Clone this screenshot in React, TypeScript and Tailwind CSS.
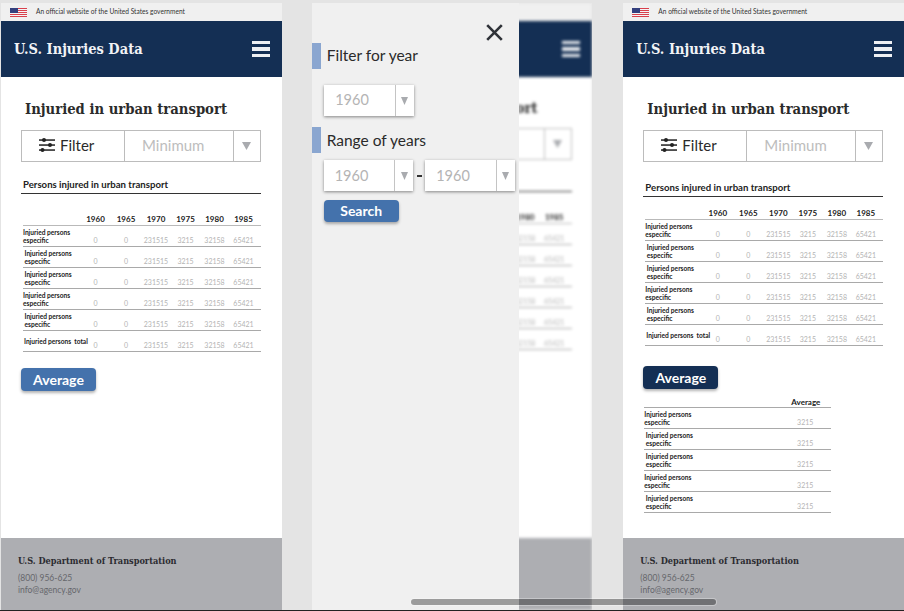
import React from "react";

const serif = "font-['DejaVu_Serif_Condensed','DejaVu_Serif',serif]";
const sans = "font-['Lato',sans-serif]";
const YEARS = ["1960", "1965", "1970", "1975", "1980", "1985"];
const VALUES = ["0", "0", "231515", "3215", "32158", "65421"];
const INDENTS = [false, true, true, false, true];
const GRID = "grid grid-cols-[57px_31px_30px_30px_29px_29px_29px]";

function Flag() {
  return (
    <svg width="17" height="9" viewBox="0 0 17 9" className="shrink-0">
      <rect width="17" height="9" fill="#f4f4f6" />
      {[0, 2, 4, 6, 8].map((y) => (
        <rect key={y} y={y} width="17" height="1" fill="#d9404c" />
      ))}
      <rect width="8" height="5" fill="#34407e" />
    </svg>
  );
}

function SliderIcon() {
  return (
    <svg width="16" height="16" viewBox="0 0 16 16" className="shrink-0" fill="#222">
      <rect y="2.3" width="16" height="1.5" />
      <rect y="7.3" width="16" height="1.5" />
      <rect y="12.3" width="16" height="1.5" />
      <circle cx="5" cy="3" r="2" />
      <circle cx="11" cy="8" r="2" />
      <circle cx="3.5" cy="13" r="2" />
    </svg>
  );
}

function Arrow({ size = "m" }: { size?: "m" | "s" }) {
  return (
    <svg width={size === "m" ? 9 : 7} height={8} viewBox="0 0 9 8" preserveAspectRatio="none">
      <path d="M0 0h9L4.5 8z" fill="#a9abaf" />
    </svg>
  );
}

function DataTable({ rowsTop }: { rowsTop: string }) {
  return (
    <div className={rowsTop}>
      <div className={`${GRID} h-[15px] items-end border-b border-[#b9b9b9] pb-[1px] text-center text-[8px] font-bold leading-[10px] text-[#222] ${sans}`}>
        <span />
        {YEARS.map((y) => (
          <span key={y}>{y}</span>
        ))}
      </div>
      {INDENTS.map((indent, i) => (
        <div key={i} className={`${GRID} h-[21px] border-b border-[#a9a9a9]`}>
          <span className={`self-center text-[6.6px] font-bold leading-[8.4px] text-[#222] ${sans} ${indent ? "pl-[1.5px]" : ""}`}>
            Injuried persons
            <br />
            especific
          </span>
          {VALUES.map((v, k) => (
            <span key={k} className={`self-end pb-[1px] text-center text-[7px] leading-[9px] text-[#b4b4b4] ${sans}`}>
              {v}
            </span>
          ))}
        </div>
      ))}
      <div className={`${GRID} h-[21px] border-b border-[#a9a9a9]`}>
        <span className={`self-center whitespace-nowrap pl-[1px] text-[6.6px] font-bold leading-[8px] text-[#222] ${sans}`}>
          Injuried persons&nbsp; total
        </span>
        {VALUES.map((v, k) => (
          <span key={k} className={`self-end pb-[1px] text-center text-[7px] leading-[9px] text-[#b4b4b4] ${sans}`}>
            {v}
          </span>
        ))}
      </div>
    </div>
  );
}

function AverageTable() {
  return (
    <div className="mt-[7px] ml-[1px] w-[187px]">
      <div className={`flex h-[12px] items-center justify-end border-b border-[#a9a9a9] pr-[11px] text-[8px] font-bold text-[#222] ${sans}`}>
        Average
      </div>
      {INDENTS.map((indent, i) => (
        <div key={i} className="flex h-[21px] justify-between border-b border-[#a9a9a9] pr-[18px]">
          <span className={`self-center text-[6.6px] font-bold leading-[8.4px] text-[#222] ${sans} ${indent ? "pl-[1.5px]" : ""}`}>
            Injuried persons
            <br />
            especific
          </span>
          <span className={`self-end pb-[1px] text-[7px] leading-[9px] text-[#b4b4b4] ${sans}`}>3215</span>
        </div>
      ))}
    </div>
  );
}

function Page({
  persons,
  titleGap,
  personsGap,
  tableGap,
  buttonGap,
  buttonDark,
  children,
}: {
  persons: string;
  titleGap: string;
  personsGap: string;
  tableGap: string;
  buttonGap: string;
  buttonDark?: boolean;
  children?: React.ReactNode;
}) {
  return (
    <div className="flex h-full flex-col bg-white">
      <div className="flex h-[18px] items-center gap-[9px] bg-[#f0f0f0] pl-[9px]">
        <Flag />
        <span className={`text-[6.6px] text-[#333] ${sans}`}>An official website of the United States government</span>
      </div>
      <header className="flex h-[56px] items-center justify-between bg-[#142f54] pl-[13px] pr-[12px]">
        <span className={`text-[14.5px] font-bold text-[#f1f3f6] ${serif}`}>U.S. Injuries Data</span>
        <div className="flex w-[18px] flex-col gap-[3px]">
          <span className="h-[3.5px] bg-[#eef0f3]" />
          <span className="h-[3.5px] bg-[#eef0f3]" />
          <span className="h-[3.5px] bg-[#eef0f3]" />
        </div>
      </header>
      <main className="flex-1 px-[20px]">
        <h1 className={`${titleGap} ml-[4px] whitespace-nowrap text-[14.7px] font-bold leading-[22px] text-[#2b2b2b] ${serif}`}>
          Injuried in urban transport
        </h1>
        <div className={`mt-[10px] flex h-[32px] w-[240px] items-stretch border border-[#bcbcbc] text-[15px] ${sans}`}>
          <div className="flex w-[103px] items-center gap-[5px] border-r border-[#bcbcbc] pb-[2px] pl-[17px] text-[#2a2a2a]">
            <SliderIcon />
            <span>Filter</span>
          </div>
          <div className="flex w-[109px] items-center border-r border-[#bcbcbc] pb-[2px] pl-[17px] text-[#bdbdbd]">Minimum</div>
          <div className="flex flex-1 items-center justify-center pr-[1px]">
            <Arrow />
          </div>
        </div>
        <div className={`${personsGap} ml-[2px] h-[15px] w-[238px] whitespace-nowrap text-[9.6px] font-bold leading-[13px] text-[#222] ${sans}`}>
          {persons}
        </div>
        <div className="h-px w-[240px] bg-[#333]" />
        <div className="ml-[2px] w-[238px]">
          <DataTable rowsTop={tableGap} />
        </div>
        <button className={`${buttonGap} flex h-[23px] w-[75px] items-center justify-center rounded-[4px] text-[14px] font-bold text-white shadow-[0_2px_3px_rgba(0,0,0,0.3)] ${sans} ${buttonDark ? "bg-[#142f54]" : "bg-[#4472ac]"}`}>
          Average
        </button>
        {children}
      </main>
      <footer className="h-[72px] bg-[#adaeb2] px-[17px] pt-[17px]">
        <div className={`text-[9.1px] font-bold leading-[12px] text-[#2b2b30] ${serif}`}>U.S. Department of Transportation</div>
        <div className="mt-[5px] font-['Lato',sans-serif] text-[8.5px] leading-[12px] text-[#66676c]">(800) 956-625</div>
        <div className="font-['Lato',sans-serif] text-[8.5px] leading-[12px] text-[#66676c]">info@agency.gov</div>
      </footer>
    </div>
  );
}

function YearSelect({ className = "", textPad = "pb-[1px]" }: { className?: string; textPad?: string }) {
  return (
    <div className={`flex h-[31px] w-[89.5px] items-stretch bg-white shadow-[0_1px_3px_rgba(0,0,0,0.45)] ${className}`}>
      <div className={`flex flex-1 items-center border-r border-[#c4c4c4] ${textPad} pl-[11px] text-[14.5px] text-[#b4b4b4] ${sans}`}>1960</div>
      <div className="flex w-[18px] items-center justify-center">
        <Arrow size="s" />
      </div>
    </div>
  );
}

function Drawer() {
  return (
    <div className="absolute inset-y-0 left-0 w-[207px] bg-[#f0f0f0]">
      <div className="mb-[2px] flex h-[38px] items-end justify-end pr-[16px]">
        <svg width="17" height="17" viewBox="0 0 17 17">
          <path d="M1.2 1.2 15.8 15.8M15.8 1.2 1.2 15.8" stroke="#2f3238" strokeWidth="2.6" fill="none" />
        </svg>
      </div>
      <div className="flex h-[26px] items-center">
        <span className="h-full w-[9px] bg-[#8aa6d0]" />
        <span className={`ml-[6px] text-[15.5px] text-[#2a2a2a] ${sans}`}>Filter for year</span>
      </div>
      <YearSelect className="mt-[16px] ml-[12.5px]" />
      <div className="mt-[11px] flex h-[26px] items-center">
        <span className="h-full w-[9px] bg-[#8aa6d0]" />
        <span className={`ml-[6px] pt-[2px] text-[15.5px] text-[#2a2a2a] ${sans}`}>Range of years</span>
      </div>
      <div className="mt-[7px] ml-[12px] flex items-center">
        <YearSelect textPad="pt-[1px]" />
        <span className="mx-[3.5px] h-[2px] w-[5px] bg-[#333]" />
        <YearSelect textPad="pt-[1px]" />
      </div>
      <button className={`mt-[9px] ml-[12px] flex h-[22px] w-[75px] items-center justify-center rounded-[4px] bg-[#4472ac] pb-[1px] text-[14px] font-bold text-white shadow-[0_2px_3px_rgba(0,0,0,0.3)] ${sans}`}>
        Search
      </button>
    </div>
  );
}

export default function App() {
  const persons = "Persons injured in urban transport";
  return (
    <div className="relative flex h-[611px] w-[904px] flex-col overflow-hidden bg-[#e4e4e4]">
      <div className="flex min-h-0 flex-1 gap-[30px] pl-[1px] pt-[3px]">
        <div className="w-[281px]">
          <Page persons={persons} titleGap="mt-[21px]" personsGap="mt-[16px]" tableGap="mt-[17px]" buttonGap="mt-[16px]" />
        </div>
        <div className="relative w-[281px] overflow-hidden">
          <div className="h-full blur-[1.5px]">
            <Page persons={persons} titleGap="mt-[20px] mb-[-1px]" personsGap="mt-[16px]" tableGap="mt-[17px]" buttonGap="mt-[16px]" />
          </div>
          <Drawer />
        </div>
        <div className="ml-[1px] w-[281px]">
          <Page persons={persons} titleGap="mt-[21px]" personsGap="mt-[19px]" tableGap="mt-[8px]" buttonGap="mt-[20px]" buttonDark>
            <AverageTable />
          </Page>
        </div>
      </div>
      <div className="h-px bg-[#222]" />
      <div className="absolute left-[411px] top-[599px] h-[6px] w-[305px] rounded-full bg-black/35 ring-1 ring-white/30" />
    </div>
  );
}
